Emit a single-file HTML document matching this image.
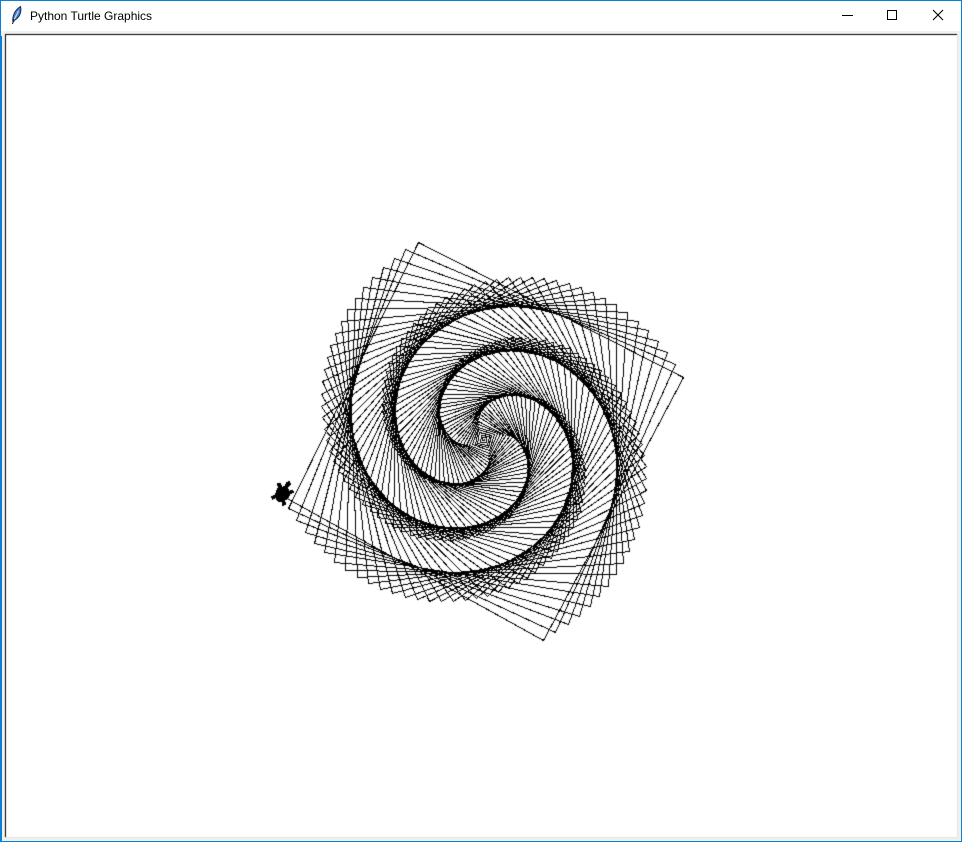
<!DOCTYPE html>
<html lang="en">
<head>
<meta charset="utf-8">
<title>Python Turtle Graphics</title>
<style>
html,body{margin:0;padding:0;background:#f0f0f0;}
body{position:relative;width:962px;height:842px;overflow:hidden;font-family:"Liberation Sans",sans-serif;}
.abs{position:absolute;}
#titlebar{left:0;top:0;width:962px;height:31px;background:#fff;}
#title{left:30px;top:9px;font-size:12px;line-height:14px;color:#000;white-space:nowrap;}
#cv{left:0;top:0;}
.b{background:#0b7fd4;}
</style>
</head>
<body>
<div class="abs" id="titlebar"></div>
<div class="abs" id="title">Python Turtle Graphics</div>
<svg class="abs" style="left:10px;top:5px" width="14" height="20" viewBox="0 0 14 20">
  <path d="M3 17 C2 12 4.5 5 10.5 1.5 C11.8 6 10 12 5 15 Z" fill="#4a7fd0" stroke="#14294f" stroke-width="1"/>
  <path d="M3.5 16 L8.5 6" stroke="#cfe0f5" stroke-width="1" fill="none"/>
  <path d="M2.5 19 L4 14" stroke="#111" stroke-width="1" fill="none"/>
</svg>
<svg class="abs" style="left:830px;top:0" width="132" height="31" viewBox="0 0 132 31" shape-rendering="crispEdges">
  <rect x="12" y="15" width="11" height="1" fill="#000"/>
  <rect x="57.5" y="10.5" width="9" height="9" fill="none" stroke="#000" stroke-width="1"/>
  <path d="M103 10 L113 20 M113 10 L103 20" stroke="#000" stroke-width="1.1" fill="none" shape-rendering="geometricPrecision"/>
</svg>
<canvas class="abs" id="cv" width="962" height="842"></canvas>
<div class="abs b" style="left:0;top:0;width:962px;height:1px"></div>
<div class="abs b" style="left:0;top:0;width:1px;height:842px"></div>
<div class="abs b" style="left:1px;top:36px;width:1px;height:806px"></div>
<div class="abs b" style="left:961px;top:0;width:1px;height:842px"></div>
<div class="abs b" style="left:0;top:841px;width:962px;height:1px"></div>
<script>
(function(){
  var c=document.getElementById('cv').getContext('2d');
  c.fillStyle='#ffffff';c.fillRect(5,34,952,803);
  c.fillStyle='#000000';
  c.fillRect(5,34,952,1);
  c.fillRect(5,34,1,803);
  c.fillStyle='#e3e3e3';
  c.fillRect(957,34,1,804);
  c.fillRect(5,837,953,1);
  c.fillStyle='#000000';
  // aliased band of width 1: every pixel whose centre lies within 0.5px of the line
  function line(x0,y0,x1,y1){
    var dx=x1-x0,dy=y1-y0,i,a,b,p,q,m,ext,v,lo,hi;
    if(dx===0&&dy===0){c.fillRect(x0,y0,1,1);return;}
    if(Math.abs(dx)>=Math.abs(dy)){
      m=dy/dx;ext=0.5*Math.sqrt(1+m*m);
      a=Math.min(x0,x1);b=Math.max(x0,x1);
      for(i=a;i<=b;i++){
        v=y0+m*(i-x0);lo=Math.ceil(v-ext);hi=Math.floor(v+ext);
        if(hi<lo){lo=hi=Math.round(v);}
        c.fillRect(i,lo,1,hi-lo+1);
      }
    }else{
      m=dx/dy;ext=0.5*Math.sqrt(1+m*m);
      a=Math.min(y0,y1);b=Math.max(y0,y1);
      for(i=a;i<=b;i++){
        v=x0+m*(i-y0);lo=Math.ceil(v-ext);hi=Math.floor(v+ext);
        if(hi<lo){lo=hi=Math.round(v);}
        c.fillRect(lo,i,hi-lo+1,1);
      }
    }
  }
  var cx=484,cy=439,x=0,y=0,h=0,r=Math.PI/180;
  for(var i=0;i<300;i++){
    var nx=x+i*Math.cos(h*r),ny=y+i*Math.sin(h*r);
    line(Math.round(cx+x),Math.round(cy-y),Math.round(cx+nx),Math.round(cy-ny));
    x=nx;y=ny;h-=91;
  }
  var pts=[[0,16],[-2,14],[-1,10],[-4,7],[-7,9],[-9,8],[-6,5],[-7,1],[-5,-3],[-8,-6],[-6,-8],[-4,-5],[0,-7],[4,-5],[6,-8],[8,-6],[5,-3],[7,1],[6,5],[9,8],[7,9],[4,7],[1,10],[2,14]];
  var hx=Math.cos(h*r),hy=Math.sin(h*r);
  var poly=pts.map(function(p){
    var px=x+p[1]*hx+p[0]*hy,py=y+p[1]*hy-p[0]*hx;
    return [cx+px,cy-py];
  });
  function inside(a,b){
    var k=false;
    for(var i=0,j=poly.length-1;i<poly.length;j=i++){
      var xi=poly[i][0],yi=poly[i][1],xj=poly[j][0],yj=poly[j][1];
      if((yi>b)!==(yj>b)&&a<(xj-xi)*(b-yi)/(yj-yi)+xi)k=!k;
    }
    return k;
  }
  var bx=Math.round(cx+x),by=Math.round(cy-y);
  for(var py=by-22;py<=by+22;py++){
    for(var px=bx-22;px<=bx+22;px++){
      if(inside(px,py))c.fillRect(px,py,1,1);
    }
  }
  for(var i=0,j=poly.length-1;i<poly.length;j=i++){
    line(Math.round(poly[j][0]),Math.round(poly[j][1]),Math.round(poly[i][0]),Math.round(poly[i][1]));
  }
})();
</script>
</body>
</html>
